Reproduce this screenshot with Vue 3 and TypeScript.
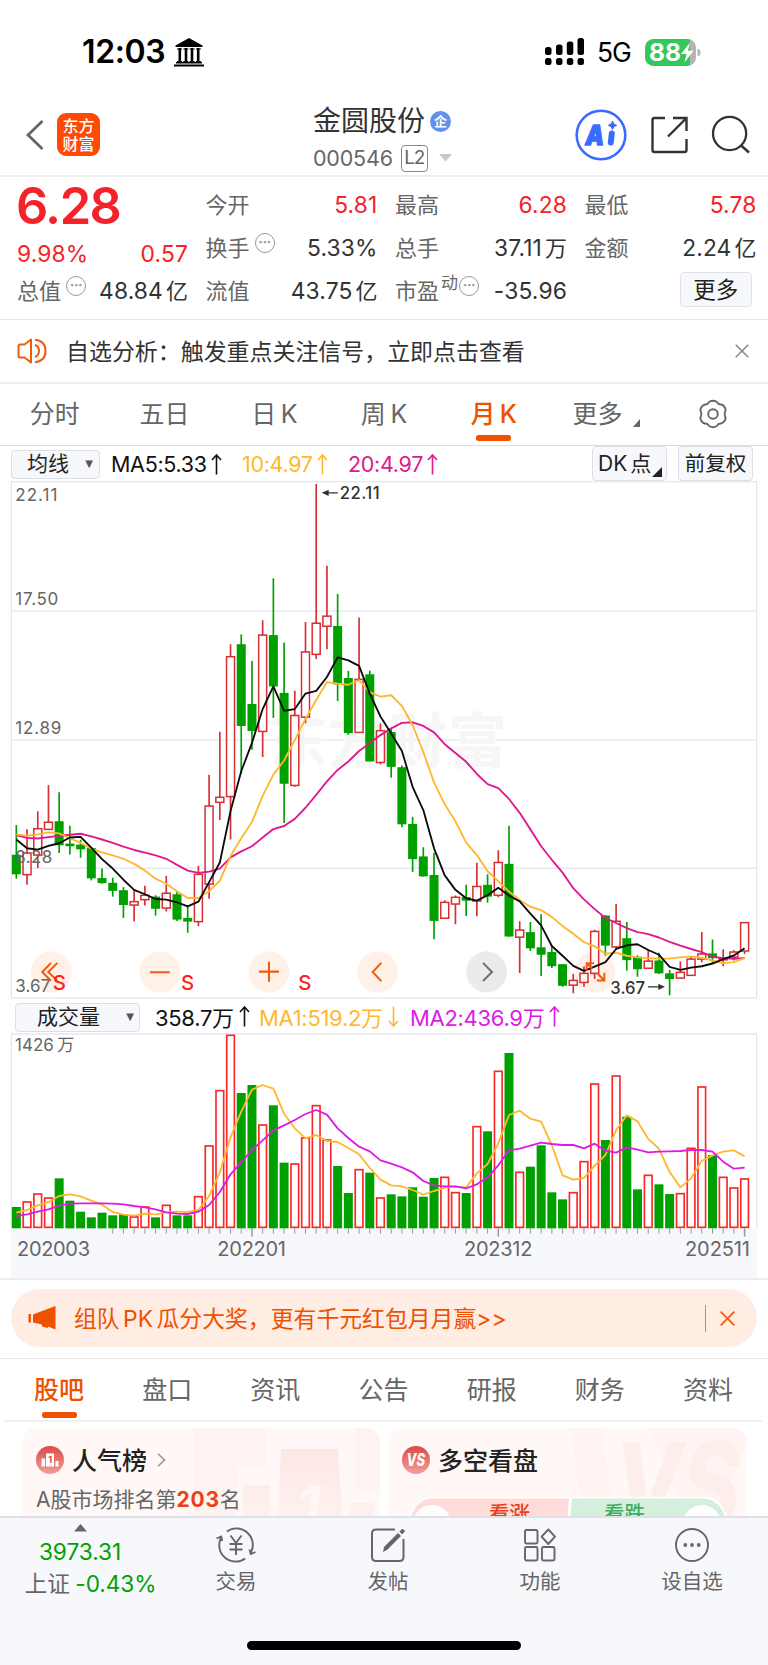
<script setup lang="ts">
type Candle = [kind: 'r' | 'g', high: number, top: number, bottom: number, low: number]

const STEP = 32.13
const FIRST = 49
const cx = (i: number): number => +(FIRST + STEP * i).toFixed(1)

const candles: Candle[] = [
  ['g', 1021, 1110, 1165, 1180], ['r', 1034, 1104, 1168, 1198], ['r', 980, 1032, 1110, 1148], ['r', 903, 1013, 1034, 1034],
  ['g', 924, 1011, 1079, 1104], ['g', 1023, 1077, 1082, 1108], ['g', 1065, 1080, 1091, 1118], ['g', 1088, 1090, 1177, 1185],
  ['g', 1150, 1179, 1191, 1195], ['g', 1177, 1193, 1214, 1233], ['g', 1205, 1215, 1256, 1296], ['r', 1214, 1248, 1258, 1307],
  ['r', 1201, 1229, 1242, 1259], ['g', 1229, 1234, 1267, 1289], ['r', 1171, 1223, 1267, 1277], ['g', 1217, 1227, 1299, 1305],
  ['g', 1258, 1297, 1305, 1340], ['r', 1142, 1167, 1307, 1321], ['r', 872, 965, 1196, 1239], ['r', 745, 939, 954, 1006],
  ['r', 486, 523, 937, 1064], ['g', 457, 487, 726, 870], ['g', 536, 664, 741, 798], ['r', 415, 459, 744, 820],
  ['g', 291, 460, 609, 704], ['g', 481, 631, 897, 1015], ['r', 624, 697, 904, 908], ['r', 420, 509, 702, 720],
  ['r', 12, 424, 516, 530], ['r', 254, 403, 433, 501], ['g', 337, 433, 603, 654], ['g', 565, 587, 747, 754],
  ['r', 407, 590, 747, 749], ['g', 564, 576, 831, 833], ['r', 721, 742, 836, 842], ['g', 735, 747, 847, 881],
  ['g', 845, 851, 1017, 1028], ['g', 997, 1019, 1120, 1160], ['g', 1087, 1115, 1171, 1174], ['g', 1103, 1170, 1303, 1359],
  ['r', 1244, 1250, 1297, 1298], ['r', 1230, 1235, 1255, 1315], ['g', 1198, 1235, 1243, 1290], ['r', 1133, 1203, 1246, 1291],
  ['g', 1167, 1199, 1231, 1251], ['r', 1096, 1132, 1229, 1235], ['g', 1023, 1137, 1349, 1352], ['r', 1306, 1332, 1353, 1459],
  ['g', 1308, 1339, 1384, 1394], ['g', 1285, 1384, 1403, 1468], ['g', 1376, 1398, 1437, 1444], ['g', 1433, 1434, 1495, 1500],
  ['r', 1461, 1481, 1495, 1519], ['r', 1440, 1460, 1487, 1500], ['r', 1331, 1336, 1460, 1477], ['g', 1288, 1290, 1376, 1408],
  ['r', 1255, 1306, 1382, 1388], ['g', 1308, 1357, 1419, 1452], ['g', 1407, 1412, 1446, 1470], ['r', 1390, 1424, 1445, 1446],
  ['g', 1399, 1423, 1458, 1462], ['g', 1450, 1461, 1475, 1525], ['r', 1425, 1457, 1474, 1475], ['r', 1410, 1418, 1466, 1466],
  ['r', 1338, 1403, 1418, 1427], ['g', 1360, 1402, 1413, 1430], ['r', 1389, 1415, 1420, 1439], ['r', 1392, 1397, 1412, 1422],
  ['r', 1308, 1310, 1394, 1403],
]

const ma5 = [1064, 1090, 1094, 1083, 1075, 1058, 1056, 1088, 1122, 1150, 1183, 1213, 1226, 1240, 1242, 1250, 1262, 1248, 1190, 1132, 980, 862, 778, 678, 611, 683, 678, 632, 624, 583, 525, 534, 550, 632, 700, 750, 802, 908, 977, 1090, 1170, 1213, 1238, 1245, 1229, 1207, 1230, 1247, 1283, 1318, 1379, 1408, 1438, 1453, 1440, 1427, 1388, 1377, 1374, 1391, 1405, 1441, 1450, 1443, 1439, 1431, 1418, 1407, 1386]
const ma10 = [1049, 1053, 1049, 1043, 1046, 1060, 1074, 1091, 1102, 1111, 1121, 1136, 1156, 1180, 1195, 1217, 1237, 1237, 1217, 1186, 1113, 1060, 1012, 935, 872, 830, 770, 707, 651, 598, 603, 606, 592, 628, 641, 637, 669, 725, 805, 895, 960, 1010, 1073, 1110, 1158, 1187, 1218, 1243, 1263, 1273, 1293, 1320, 1343, 1368, 1380, 1402, 1399, 1408, 1413, 1415, 1417, 1416, 1413, 1410, 1414, 1422, 1430, 1427, 1415]
const ma20 = [1051, 1059, 1061, 1057, 1053, 1050, 1047, 1055, 1064, 1074, 1085, 1095, 1103, 1111, 1121, 1139, 1156, 1163, 1159, 1150, 1117, 1099, 1084, 1058, 1033, 1024, 1003, 970, 932, 892, 858, 833, 802, 779, 755, 735, 719, 717, 728, 747, 782, 808, 834, 870, 900, 912, 944, 985, 1034, 1084, 1124, 1162, 1208, 1241, 1270, 1296, 1311, 1326, 1338, 1344, 1354, 1367, 1378, 1388, 1397, 1411, 1415, 1417, 1415]

const volTops = [636, 619, 595, 607, 550, 617, 650, 667, 653, 661, 658, 664, 634, 667, 629, 661, 661, 603, 451, 285, 119, 294, 270, 388, 331, 503, 505, 427, 330, 433, 513, 594, 522, 533, 607, 598, 604, 577, 605, 549, 545, 591, 594, 393, 409, 227, 174, 530, 515, 451, 592, 613, 591, 498, 265, 435, 241, 365, 583, 539, 568, 597, 594, 458, 274, 480, 545, 577, 550]
const vma1 = [653, 645, 631, 621, 603, 598, 604, 617, 629, 651, 659, 662, 656, 658, 652, 650, 651, 645, 603, 532, 427, 350, 284, 270, 281, 356, 400, 430, 420, 438, 441, 459, 478, 519, 554, 571, 574, 585, 599, 588, 578, 575, 577, 535, 507, 445, 360, 347, 371, 380, 450, 541, 554, 549, 512, 480, 406, 361, 379, 432, 461, 531, 577, 550, 498, 481, 470, 466, 484]
const vma2 = [663, 658, 650, 643, 632, 626, 625, 625, 625, 626, 628, 633, 637, 643, 652, 656, 657, 650, 630, 591, 538, 502, 465, 436, 406, 391, 375, 357, 345, 359, 400, 429, 455, 469, 496, 506, 517, 532, 558, 571, 574, 574, 580, 568, 547, 511, 466, 461, 452, 443, 447, 450, 450, 460, 446, 467, 473, 457, 464, 472, 470, 469, 468, 465, 465, 470, 500, 521, 518]

const line = (v: number[]): string => v.map((y, i) => `${cx(i)},${y}`).join(' ')
const ticks = candles.map((_, i) => i).filter((i) => i > 8)

const levels = [
  { t: '22.11', y: 62, w: 126 },
  { t: '17.50', y: 369, w: 129 },
  { t: '12.89', y: 751, w: 138 },
  { t: '8.28', y: 1133, w: 111 },
  { t: '3.67', y: 1515, w: 105 },
]
const signals = [158, 543, 895]
const dates = [
  { t: '202003', x: 51, w: 219 },
  { t: '202201', x: 652, w: 206 },
  { t: '202312', x: 1392, w: 205 },
  { t: '202511', x: 2055, w: 195 },
]
const averages = [
  { t: 'MA5:5.33', c: 'k' },
  { t: '10:4.97', c: 'y' },
  { t: '20:4.97', c: 'm' },
]
const volumes = [
  { t: '358.7万', c: 'k', down: false },
  { t: 'MA1:519.2万', c: 'y', down: true },
  { t: 'MA2:436.9万', c: 'p', down: false },
]
const periods = ['分时', '五日', '日 K', '周 K', '月 K']
const sections = ['股吧', '盘口', '资讯', '公告', '研报', '财务', '资料']
</script>

<template>
  <div class="page">
    <div class="status">
      <span class="clock">12:03</span>
      <svg class="bank" width="30" height="29" viewBox="0 0 30 29">
        <path d="M15 0 L28.5 7.5 V9 H1.500 V7.500Z M2 24 H28 V25.500 H2Z M0 26.500 H30 V28.500 H0Z" />
        <path d="M5.800 10V24M12 10V24M18 10V24M24.200 10V24" stroke="#000" stroke-width="2.600" />
        <path d="M3 11H27M3 23.500H27" stroke="#000" stroke-width="1.200" stroke-dasharray="5 1.300" />
      </svg>
      <svg class="signal" width="39" height="28" viewBox="0 0 39 28">
        <g fill="#000">
          <rect x="0" y="9" width="6.500" height="8" rx="2.500" /><rect x="11" y="6.500" width="6.500" height="10.500" rx="2.500" />
          <rect x="21.800" y="3.500" width="6.500" height="13.500" rx="2.500" /><rect x="32.500" y="0" width="6.500" height="17" rx="2.500" />
          <rect v-for="x in [0, 11, 21.8, 32.5]" :key="x" :x="x" y="20" width="6.500" height="7" rx="2.500" />
        </g>
      </svg>
      <span class="net">5G</span>
      <svg class="battery" width="56" height="27" viewBox="0 0 56 27">
        <defs><clipPath id="bat"><rect width="51" height="27" rx="8.500" /></clipPath></defs>
        <g clip-path="url(#bat)"><rect width="45" height="27" fill="#34c759" /><rect x="45" width="6" height="27" fill="#b5b5b5" /></g>
        <path d="M52.500 9.500 Q55.500 10.500 55.500 13.500 T52.500 17.500Z" fill="#b5b5b5" />
        <text x="4" y="22.300" font-size="24.500" font-weight="700" fill="#fff" textLength="32" lengthAdjust="spacingAndGlyphs">88</text>
        <path d="M45 3.500 L36 15 H41.500 L39.500 23.500 L48.500 11.800 H43Z" fill="#fff" />
      </svg>
    </div>

    <header class="header">
      <svg class="back" width="18" height="30" viewBox="0 0 18 30"><path d="M16.500 1 L2 15 L16.500 29" fill="none" stroke="#666" stroke-width="2.800" /></svg>
      <div class="logo"><span>东方</span><span>财富</span></div>
      <div class="title">
        <div class="name">金圆股份<i class="qi">企</i></div>
        <div class="code">000546<i class="l2">L2</i>
          <svg width="13" height="8" viewBox="0 0 13 8"><path d="M0 0H13L6.500 7.500Z" fill="#c8c8c8" /></svg>
        </div>
      </div>
      <svg class="tools" width="182" height="52" viewBox="0 0 182 52">
        <circle cx="26" cy="26" r="24.300" fill="none" stroke="#3a6bff" stroke-width="2.600" />
        <text x="10.500" y="35.500" font-size="27" font-weight="900" font-style="italic" fill="#3a6bff" stroke="#3a6bff" stroke-width="1.500" stroke-linejoin="round" textLength="18.500" lengthAdjust="spacingAndGlyphs">A</text>
        <path d="M36.800 24.500 L35.800 33.500" stroke="#3a6bff" stroke-width="6" stroke-linecap="round" />
        <path d="M37.500 12 Q38 15.800 41.800 16.300 Q38 17 37.500 20.600 Q37 17 33.200 16.300 Q37 15.800 37.500 12Z" fill="#3a6bff" stroke="#3a6bff" stroke-width="1" />
        <path d="M90 9H79.500Q77.500 9 77.500 11V41Q77.500 43 79.500 43H109.500Q111.500 43 111.500 41V30" fill="none" stroke="#333" stroke-width="2.400" />
        <path d="M98 9H111.500V22M111.500 9L93 27.500" fill="none" stroke="#333" stroke-width="2.400" />
        <circle cx="154.600" cy="24.500" r="16.600" fill="none" stroke="#333" stroke-width="2.300" />
        <path d="M165.500 36L174 43.500" stroke="#333" stroke-width="2.600" />
      </svg>
    </header>

    <section class="quote">
      <div class="cell price">6.28</div>
      <div class="cell"><span>今开</span><b class="up">5.81</b></div>
      <div class="cell"><span>最高</span><b class="up">6.28</b></div>
      <div class="cell"><span>最低</span><b class="up">5.78</b></div>
      <div class="cell change"><b class="up">9.98%</b><b class="up">0.57</b></div>
      <div class="cell"><span>换手</span><i class="dots">···</i><b>5.33%</b></div>
      <div class="cell"><span>总手</span><b>37.11<u>万</u></b></div>
      <div class="cell"><span>金额</span><b>2.24<u>亿</u></b></div>
      <div class="cell"><span>总值</span><i class="dots">···</i><b>48.84<u>亿</u></b></div>
      <div class="cell"><span>流值</span><b>43.75<u>亿</u></b></div>
      <div class="cell"><span>市盈</span><sup>动</sup><i class="dots tight">···</i><b>-35.96</b></div>
      <div class="cell end"><button class="more">更多</button></div>
    </section>

    <section class="notice">
      <svg width="31" height="26" viewBox="0 0 31 26">
        <path d="M14 1.500V24.500L7.500 19.500H3Q1.500 19.500 1.500 18V8Q1.500 6.500 3 6.500H7.500Z M18 7Q22 8.500 22 13T18 19 M18 1.800Q28.500 3 28.500 13T18 24.200" fill="none" stroke="#f05a0a" stroke-width="2" stroke-linejoin="round" />
      </svg>
      <span>自选分析：触发重点关注信号，立即点击查看</span>
      <svg class="close" width="14" height="14" viewBox="0 0 14 14"><path d="M.7.7L13.300 13.300M13.300.7L.7 13.300" stroke="#8a8a8a" stroke-width="1.600" /></svg>
    </section>

    <nav class="periods">
      <span v-for="p in periods" :key="p" :class="['period', { active: p === '月 K' }]">{{ p }}</span>
      <span class="period wide">更多<svg width="7" height="8" viewBox="0 0 7 8"><path d="M7 0V8H0Z" fill="#666" /></svg></span>
      <span class="period gear">
        <svg width="30" height="30" viewBox="0 0 30 30" fill="none" stroke="#666" stroke-width="1.900">
          <path d="M11 3.200Q12 1.800 15 1.800T19 3.200Q20.200 5.700 23 5.500Q25.300 5.600 26.800 8.500T27.200 12Q26 15 27.200 18Q28.200 19 26.800 21.500T23 24.500Q20.200 24.300 19 26.800Q18 28.200 15 28.200T11 26.800Q9.800 24.300 7 24.500Q4.700 24.400 3.200 21.500T2.800 18Q4 15 2.800 12Q1.800 11 3.200 8.500T7 5.500Q9.800 5.700 11 3.200Z" />
          <circle cx="15" cy="15" r="4.800" />
        </svg>
      </span>
    </nav>

    <div class="indicators">
      <span class="box avg">均线<em>▼</em></span>
      <span v-for="a in averages" :key="a.t" :class="['ma', a.c]">{{ a.t }}<svg width="11" height="21" viewBox="0 0 11 21"><path d="M5.500 20.500V1M1 6L5.500 1L10 6" /></svg></span>
      <span class="box dk">DK 点<svg width="10" height="10" viewBox="0 0 10 10"><path d="M10 0V10H0Z" fill="#222" /></svg></span>
      <span class="box right">前复权</span>
    </div>

    <svg class="chart" width="768" height="518" viewBox="0 3 2304 1533" preserveAspectRatio="none">
      <g fill="none" stroke="#e6e8ef" stroke-width="4">
        <rect x="34" y="5" width="2236" height="1528" />
        <path d="M34 388H2270M34 769H2270M34 1149H2270" />
      </g>
      <text class="mark" x="805" y="838" textLength="716">东方财富</text>
      <g>
        <circle v-for="x in [154, 479, 807, 1133, 1785]" :key="x" :cx="x" cy="1456" r="61" fill="#fff0e8" />
        <circle cx="1460" cy="1456" r="61" fill="#ebebeb" />
      </g>
      <g v-for="(c, i) in candles" :key="i">
        <template v-if="c[0] === 'g'">
          <path :d="`M${cx(i)} ${c[1]}V${c[4]}`" stroke="#00a000" stroke-width="5" />
          <rect :x="cx(i) - 13.500" :y="c[2] - 1" width="27" :height="c[3] - c[2] + 3" fill="#00a000" />
        </template>
        <template v-else>
          <path :d="`M${cx(i)} ${c[1]}V${c[2]}M${cx(i)} ${c[3]}V${c[4]}`" stroke="#d63034" stroke-width="5" />
          <rect :x="cx(i) - 12" :y="c[2]" width="24" :height="c[3] - c[2]" fill="#fff" fill-opacity=".6" stroke="#d63034" stroke-width="4.500" />
        </template>
      </g>
      <g fill="none" stroke-width="5.500" stroke-linejoin="round">
        <polyline :points="line(ma20)" stroke="#e0188e" />
        <polyline :points="line(ma10)" stroke="#ffb82e" />
        <polyline :points="line(ma5)" stroke="#0a0a0a" />
      </g>
      <text v-for="l in levels" :key="l.t" class="level" x="46" :y="l.y" :textLength="l.w">{{ l.t }}</text>
      <g fill="none" stroke="#f25a0c" stroke-width="6">
        <path d="M153 1429L127 1456L153 1482M172 1429L145 1456L172 1482" />
        <path d="M450 1457H509M777 1455H837M807 1426V1485" />
        <path d="M1144 1429L1118 1456L1144 1483" />
        <path d="M1760 1452V1430H1782M1760 1430L1776 1446M1792 1460L1813 1481M1790 1481H1813V1458" />
        <path d="M1449 1429L1476 1456L1449 1483" stroke="#707070" />
      </g>
      <text v-for="s in signals" :key="s" class="sig" :x="s" y="1509">S</text>
      <text class="tag" x="1019" y="55" textLength="120">22.11</text>
      <path d="M971 38H1013M984 32L970 38L984 44Z" stroke="#333" stroke-width="4" fill="#333" />
      <text class="tag" x="1831" y="1520" textLength="104">3.67</text>
      <path d="M1944 1500H1988M1977 1494L1990 1500L1977 1506Z" stroke="#333" stroke-width="4" fill="#333" />
    </svg>

    <div class="volhead">
      <span class="box vol">成交量<em>▼</em></span>
      <span v-for="v in volumes" :key="v.t" :class="['ma', v.c]">{{ v.t }}<svg width="11" height="21" viewBox="0 0 11 21"><path :d="v.down ? 'M5.500 .5V20M1 15L5.500 20L10 15' : 'M5.500 20.500V1M1 6L5.500 1L10 6'" /></svg></span>
    </div>

    <svg class="chart" width="768" height="245" viewBox="0 114 2304 735">
      <rect x="33" y="700" width="2238" height="149" fill="#f7f8fb" />
      <path d="M34 700V117H2270V700" fill="none" stroke="#e6e8ef" stroke-width="4" />
      <g v-for="(t, i) in volTops" :key="i">
        <rect v-if="candles[i][0] === 'g'" :x="cx(i) - 13.500" :y="t" width="27" :height="700 - t" fill="#00a000" />
        <rect v-else :x="cx(i) - 11.500" :y="t + 2" width="23" :height="695 - t" fill="#fff" stroke="#fa2828" stroke-width="5" />
      </g>
      <path v-for="i in ticks" :key="i" :d="`M${cx(i)} 700V${[22, 45, 68].includes(i) ? 725 : 716}`" stroke="#999" :stroke-width="[22, 45, 68].includes(i) ? 4.500 : 3" />
      <g fill="none" stroke-width="5.500" stroke-linejoin="round">
        <polyline :points="line(vma1)" stroke="#ffb82e" />
        <polyline :points="line(vma2)" stroke="#e01ae6" />
      </g>
      <text class="level" x="45" y="169">1426<tspan dx="10">万</tspan></text>
      <text v-for="d in dates" :key="d.t" class="date" :x="d.x" y="784" :textLength="d.w">{{ d.t }}</text>
    </svg>

    <section class="promo">
      <div class="banner">
        <svg width="28" height="24" viewBox="0 0 28 24"><path d="M.500 8H3V16.500H.500Z M5 8.500L27.500 0V23.500L20 20.500V22L14 20.500V18.500L5 16.500Z" fill="#ee5200" /></svg>
        <span>组队 PK 瓜分大奖，更有千元红包月月赢&gt;&gt;</span>
        <i class="bar"></i>
        <svg width="15" height="15" viewBox="0 0 15 15"><path d="M.7.7L14.300 14.300M14.300.7L.7 14.300" stroke="#f05a10" stroke-width="1.700" /></svg>
      </div>
    </section>

    <nav class="sections">
      <span v-for="s in sections" :key="s" :class="['section', { active: s === '股吧' }]">{{ s }}</span>
    </nav>

    <section class="cards">
      <div class="card">
        <svg class="deco" width="358" height="88" viewBox="0 0 358 88">
          <defs><linearGradient id="fade" x1="0" y1="0" x2="0" y2="1"><stop offset="0" stop-color="#fde7e4" /><stop offset="1" stop-color="#fef1ef" /></linearGradient></defs>
          <path d="M171 0H243V38H215V88H171Z M334 0H358V62H334Z" fill="#fef3f1" />
          <path d="M221 57H248V88H221Z M259 21H316L320 88H256Z M328 75H352V88H328Z" fill="url(#fade)" />
          <text x="273" y="102" font-size="62" font-weight="600" font-style="italic" fill="#fff7f5">1</text>
        </svg>
        <div class="cardhead">
          <svg width="28" height="28" viewBox="0 0 28 28">
            <defs><linearGradient id="red" x1="0" y1="0" x2="0" y2="1"><stop offset="0" stop-color="#dc4a46" /><stop offset="1" stop-color="#f0a09c" /></linearGradient></defs>
            <circle cx="14" cy="14" r="14" fill="url(#red)" />
            <path d="M5.500 12.500H9V20.500H5.500Z M10 7.500H18V20.500H10Z M19.500 15H22.500V20.500H19.500Z" fill="#fff" />
            <text x="12.200" y="17" font-size="9" font-weight="700" fill="#dc4a46">1</text>
          </svg>
          <span>人气榜</span>
          <svg class="chev" width="9" height="14" viewBox="0 0 9 14"><path d="M1 .7L7.500 7L1 13.300" fill="none" stroke="#999" stroke-width="1.600" /></svg>
        </div>
        <div class="rank">A股市场排名第<b>203</b>名</div>
      </div>
      <div class="card">
        <svg class="deco" width="358" height="88" viewBox="0 0 358 88">
          <path d="M183 0H213L226 88H194Z M260 0H358V20L330 88H300Z" fill="#fff4f2" />
          <text x="226" y="98" font-size="116" font-weight="800" font-style="italic" fill="#fdeeec" textLength="126" lengthAdjust="spacingAndGlyphs">VS</text>
        </svg>
        <div class="cardhead">
          <svg width="28" height="28" viewBox="0 0 28 28">
            <circle cx="14" cy="14" r="14" fill="url(#red)" />
            <text x="4.500" y="20" font-size="17" font-weight="800" font-style="italic" fill="#fff" textLength="18.500" lengthAdjust="spacingAndGlyphs">VS</text>
          </svg>
          <span>多空看盘</span>
        </div>
        <svg class="duel" width="324" height="38" viewBox="0 0 324 38">
          <path d="M25 0H299Q322 2 324 38H0Q2 2 25 0Z" fill="#fff" />
          <path d="M26 1.500H163L160 38H2Q4 3 26 1.500Z" fill="#fddcd9" />
          <path d="M166 1.500H298Q320 3 322 38H163Z" fill="#d5efdd" />
          <circle cx="26" cy="27" r="19" fill="#fff" /><circle cx="296" cy="27" r="19" fill="#fff" />
          <text x="83" y="24" font-size="20.500" font-weight="500" fill="#ea3f16">看涨</text>
          <text x="198" y="24" font-size="20.500" font-weight="500" fill="#3cb062">看跌</text>
        </svg>
      </div>
    </section>

    <footer class="tabbar">
      <div class="index">
        <svg width="13" height="8" viewBox="0 0 13 8"><path d="M0 7.500H13L6.500 0Z" fill="#666" /></svg>
        <b>3973.31</b>
        <p>上证 <b>-0.43%</b></p>
      </div>
      <div class="tab">
        <svg width="40" height="36" viewBox="0 0 40 36" fill="none" stroke="#666" stroke-width="1.900">
          <path d="M10.800 4.600A16.300 16.300 0 0 1 34.800 25.500M33.500 22.500L34.800 27L39.500 25" />
          <path d="M29.200 31.400A16.300 16.300 0 0 1 5.200 10.500M.5 11.500L5.200 9.500L6.200 14" />
          <path d="M14.500 8.500L20 16L25.500 8.500M20 16V28M13.500 17H26.500M13.500 22.500H26.500" />
        </svg><span>交易</span>
      </div>
      <div class="tab">
        <svg width="40" height="36" viewBox="0 0 40 36" fill="none" stroke="#666" stroke-width="2">
          <path d="M27 2.500H8Q4 2.500 4 6.500V30Q4 34 8 34H31.500Q35.500 34 35.500 30V12" />
          <path d="M15 25L16 20L30 6L33 9L19.500 22.500Z" fill="#666" stroke="none" /><path d="M32 4.500L34.500 2L36.500 4L34 7Z" fill="#666" stroke-width="1" />
        </svg><span>发帖</span>
      </div>
      <div class="tab">
        <svg width="40" height="36" viewBox="0 0 40 36" fill="none" stroke="#666" stroke-width="1.900">
          <rect x="5" y="3" width="12.500" height="13.500" rx="1.500" /><rect x="5" y="20" width="12.500" height="13.500" rx="1.500" /><rect x="22" y="20" width="12.500" height="13.500" rx="1.500" />
          <path d="M28.300 2.500L35 9.700L28.300 17L21.600 9.700Z" stroke-linejoin="round" />
        </svg><span>功能</span>
      </div>
      <div class="tab">
        <svg width="40" height="36" viewBox="0 0 40 36" fill="none" stroke="#666" stroke-width="1.900">
          <circle cx="20" cy="18" r="16" /><g fill="#666" stroke="none"><circle cx="13.300" cy="18" r="1.900" /><circle cx="20" cy="18" r="1.900" /><circle cx="26.700" cy="18" r="1.900" /></g>
        </svg><span>设自选</span>
      </div>
      <i class="home"></i>
    </footer>
  </div>
</template>

<style>
body { background: #fff; }
</style>

<style scoped>
* { box-sizing: border-box; }
.page { width: 768px; height: 1665px; overflow: hidden; background: #fff; color: #333; font-family: Inter, "Noto Sans CJK SC", sans-serif; display: flex; flex-direction: column; }
.page > * { flex: none; }
svg { display: block; flex: none; }
i, u, em { font-style: normal; text-decoration: none; }
b { font-weight: 400; }
span { white-space: nowrap; }
.status { height: 88px; padding: 17px 0 0 82px; display: flex; align-items: center; color: #000; }
.clock { width: 92px; font-size: 32px; font-weight: 600; line-height: 40px; letter-spacing: -.4px; }
.signal { margin-left: 341px; }
.net { width: 47px; padding-left: 13px; font-size: 26.500px; font-weight: 400; letter-spacing: -1px; }
.battery { margin-left: 14px; }
.status svg, .status span { margin-top: -1px; }
.header { height: 89px; border-bottom: 2px solid #eee; display: flex; align-items: flex-start; padding-left: 26px; }
.back { margin-top: 32px; }
.logo { margin: 25px 0 0 13px; width: 43px; height: 43px; border-radius: 9px; background: #ff4a05; color: #fff; font-size: 16px; line-height: 18px; font-weight: 500; display: flex; flex-direction: column; align-items: center; justify-content: center; }
.title { margin-left: 213px; width: 262px; }
.name { height: 40px; margin-top: 13px; font-size: 28px; line-height: 40px; display: flex; align-items: center; }
.qi { width: 21px; height: 21px; margin-left: 5px; border-radius: 50%; background: #6491ea; color: #fff; font-size: 13px; font-weight: 700; line-height: 20px; text-align: center; }
.code { height: 28px; margin-top: 3px; font-size: 21.500px; color: #666; display: flex; align-items: center; letter-spacing: -.2px; }
.l2 { width: 27px; height: 27px; margin: 0 11px 0 8px; border: 1.500px solid #888; border-radius: 4px; font-size: 19px; line-height: 24px; text-align: center; letter-spacing: -1px; }
.tools { margin-top: 21px; }
.quote { height: 143px; padding: 6px 12px 0 17px; border-bottom: 1px solid #e3e5ec; display: grid; grid-template-columns: 171px 172px 172px 172px; column-gap: 17.500px; grid-template-rows: 43px 43px 43px; }
.cell { display: flex; align-items: center; font-size: 22px; line-height: 42px; color: #333; }
.cell > span { color: #666; }
.cell > b { margin-left: auto; font-size: 22.800px; letter-spacing: .15px; white-space: nowrap; }
.cell u { margin-left: 3px; font-size: 22px; letter-spacing: 0; }
.cell > .up { color: #f5222a; }
.cell.price { font-size: 50.500px; font-weight: 600; letter-spacing: -1.600px; color: #f5222a; padding-top: 3px; margin-left: -1px; }
.change { padding-top: 12px; }
.change > b:first-child { margin-left: 0; }
.dots { width: 20px; height: 20px; margin: -9px 0 0 5px; border: 1.500px solid #999; border-radius: 50%; font-size: 14px; font-weight: 700; line-height: 16px; text-align: center; color: #999; letter-spacing: -.5px; }
.tight { margin-left: 1px; }
.cell sup { font-size: 17px; line-height: 20px; margin: -15px 0 0 2px; color: #666; }
.more { margin: -2px 4.500px 0 auto; width: 72.500px; height: 35px; padding: 0; border: 1.500px solid #dfe2ea; border-radius: 4px; background: #f7f8fb; font: inherit; font-size: 22.500px; line-height: 31px; color: #222; }
.notice { height: 64px; border-bottom: 2px solid #eee; padding: 0 19px 0 17px; display: flex; align-items: center; font-size: 22.950px; }
.notice > span { margin: -3px 0 0 18px; }
.notice .close { margin-left: auto; }
.periods { height: 62px; border-bottom: 1.500px solid #d8dae2; display: flex; }
.period { width: 109.800px; height: 60px; line-height: 60px; text-align: center; font-size: 25px; color: #666; word-spacing: -2.500px; }
.period.active { color: #ee5200; font-weight: 500; }
.active::after { content: ""; display: block; width: 35px; height: 6px; margin: -9px auto 0; border-radius: 2.500px; background: #ee5200; }
.wide { display: flex; align-items: center; padding-left: 24px; }
.wide svg { margin: 18px 0 0 10px; }
.gear { display: flex; align-items: center; justify-content: center; }
.indicators { height: 35px; padding: 0 15px 0 11px; display: flex; align-items: center; }
.box { height: 29px; border: 1.500px solid #dcdfe8; border-radius: 4px; background: #f7f8fb; font-size: 21px; line-height: 26px; display: flex; align-items: center; color: #222; }
.box em { font-size: 10px; color: #555; margin-left: auto; font-family: "DejaVu Sans"; }
.avg { width: 89px; padding: 0 6px 0 15px; margin-top: 1px; }
.ma { font-size: 21.500px; letter-spacing: -.3px; display: flex; align-items: center; }
.ma svg { margin-left: 4px; fill: none; stroke: currentColor; stroke-width: 1.600; }
.indicators .ma { height: 30px; margin-top: 1px; }
.k { width: 130px; padding-left: 11px; color: #111; }
.y { width: 107px; padding-left: 12px; color: #ffb82e; }
.m { width: 120px; padding-left: 11px; color: #e0188e; }
.dk { width: 75px; height: 35px; margin-left: auto; padding: 0 3px 0 5px; word-spacing: -3px; }
.dk svg { margin: 16px 0 0 1px; }
.right { width: 75px; height: 35px; margin-left: 11px; justify-content: center; font-size: 20.500px; }
.status text, .chart text, .deco text, .duel text, .cardhead text { font-family: Inter, "Noto Sans CJK SC", sans-serif; }
.mark { font-size: 178px; font-weight: 700; fill: #f6f6f6; }
.level { font-size: 51px; fill: #666; }
.sig { font-size: 61px; font-weight: 500; fill: #fa2020; }
.tag { font-size: 50px; font-weight: 500; fill: #333; }
.date { font-size: 60px; fill: #666; }
.volhead { height: 34px; padding-left: 15px; display: flex; align-items: center; }
.volhead .ma { height: 32px; font-size: 22px; letter-spacing: -.3px; }
.volhead .ma svg { margin-left: 5px; }
.volhead .k { width: 104px; padding-left: 0; margin-left: 15px; }
.volhead .y { width: 151px; padding-left: 0; }
.p { color: #e01ae6; }
.vol { width: 125px; padding: 0 5px 0 21px; margin-top: 2px; }
.promo { height: 81px; border-top: 2px solid #eceef2; border-bottom: 1.500px solid #e9e9ec; padding: 9px 11px; }
.banner { height: 58px; border-radius: 29px; background: #ffede4; color: #ee5200; padding: 0 22px 0 17px; display: flex; align-items: center; font-size: 22.850px; word-spacing: -3px; }
.banner span { margin: -2px 0 0 18px; }
.bar { width: 1.500px; height: 27px; margin: 0 14px 0 auto; background: #f27a40; }
.sections { height: 63px; margin: 0 6px 0 5px; border-bottom: 2px solid #f0f0f0; display: flex; }
.section { width: 108.300px; height: 61px; text-align: center; font-size: 25px; line-height: 62px; color: #666; }
.section.active { color: #ee5200; font-weight: 500; }
.section.active::after { margin-top: -9px; }
.cards { height: 94px; padding: 6px 22px 0; display: flex; gap: 8px; overflow: hidden; }
.card { width: 358px; height: 120px; border-radius: 14px 14px 0 0; background: #fff8f6; overflow: hidden; position: relative; }
.deco { position: absolute; left: 0; top: 0; }
.cardhead { position: relative; display: flex; align-items: center; height: 30px; margin: 17px 0 0 14px; font-size: 25px; font-weight: 500; color: #222; }
.cardhead span { margin: -2px 0 0 8px; }
.chev { margin-left: 10px; }
.rank { position: relative; margin: 10px 0 0 14px; font-size: 21px; line-height: 30px; color: #666; }
.rank b { font-weight: 700; color: #ea3f16; letter-spacing: .8px; }
.duel { position: relative; margin: 22px 0 0 18px; }
.tabbar { height: 149px; border-top: 2px solid #dfe1e6; background: #f7f8fb; display: flex; flex-wrap: wrap; align-content: flex-start; }
.index { width: 160px; height: 124px; padding-top: 6px; font-size: 22.700px; color: #666; display: flex; flex-direction: column; align-items: center; }
.index b { color: #00a000; letter-spacing: -.1px; line-height: 40px; }
.index p { margin: -9px 0 0 21px; line-height: 42px; white-space: nowrap; word-spacing: -1px; }
.tab { width: 152px; height: 124px; padding-top: 9px; display: flex; flex-direction: column; align-items: center; font-size: 20.500px; line-height: 37px; color: #666; }
.home { width: 274px; height: 9px; margin: -1px 0 0 247px; border-radius: 5px; background: #000; }
</style>
